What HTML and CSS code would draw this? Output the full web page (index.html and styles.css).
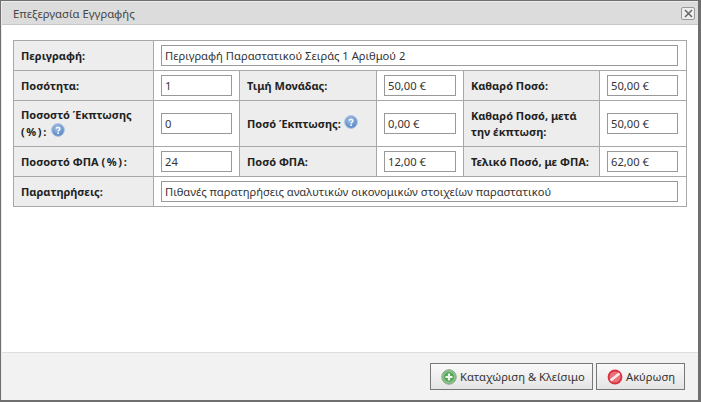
FILE: index.html
```html
<!DOCTYPE html>
<html lang="el">
<head>
<meta charset="utf-8">
<title>Επεξεργασία Εγγραφής</title>
<link rel="stylesheet" href="styles.css">
</head>
<body>
<div class="dialog">
  <header class="titlebar">
    <span class="title">Επεξεργασία Εγγραφής</span>
    <button class="close" type="button" aria-label="Κλείσιμο">
      <svg width="9" height="9" viewBox="0 0 9 9"><path d="M1 1l7 7M8 1l-7 7" stroke="#666" stroke-width="1.5" fill="none"/></svg>
    </button>
  </header>
  <main class="content">
    <table class="form">
      <colgroup><col class="c1"><col class="c2"><col class="c3"><col class="c4"><col class="c5"><col class="c6"></colgroup>
      <tr class="r30">
        <th>Περιγραφή:</th>
        <td colspan="5"><input class="inp wide" value="Περιγραφή Παραστατικού Σειράς 1 Αριθμού 2"></td>
      </tr>
      <tr class="r30">
        <th>Ποσότητα:</th><td><input class="inp" value="1"></td>
        <th>Τιμή Μονάδας:</th><td><input class="inp mid" value="50,00 €"></td>
        <th>Καθαρό Ποσό:</th><td><input class="inp" value="50,00 €"></td>
      </tr>
      <tr class="r46">
        <th>Ποσοστό Έκπτωσης <span class="pct">(%):</span> <svg class="help" viewBox="0 0 14 14"><use href="#help"/></svg></th><td><input class="inp" value="0"></td>
        <th>Ποσό Έκπτωσης: <svg class="help" viewBox="0 0 14 14"><use href="#help"/></svg></th><td><input class="inp mid" value="0,00 €"></td>
        <th>Καθαρό Ποσό, μετά την έκπτωση:</th><td><input class="inp" value="50,00 €"></td>
      </tr>
      <tr class="r30">
        <th>Ποσοστό ΦΠΑ <span class="pct">(%):</span></th><td><input class="inp" value="24"></td>
        <th>Ποσό ΦΠΑ:</th><td><input class="inp mid" value="12,00 €"></td>
        <th>Τελικό Ποσό, με ΦΠΑ:</th><td><input class="inp" value="62,00 €"></td>
      </tr>
      <tr class="r30">
        <th>Παρατηρήσεις:</th>
        <td colspan="5"><input class="inp wide" value="Πιθανές παρατηρήσεις αναλυτικών οικονομικών στοιχείων παραστατικού"></td>
      </tr>
    </table>
  </main>
  <footer class="actions">
    <button class="btn save" type="button">
      <svg class="ico" viewBox="0 0 16 16"><circle cx="8" cy="8" r="7.2" fill="#8fc08f" stroke="#7aa87a"/><circle cx="8" cy="8" r="5" fill="#55a955"/><path d="M8 4.5v7M4.5 8h7" stroke="#eef6ee" stroke-width="2.2"/></svg>
      <span>Καταχώριση &amp; Κλείσιμο</span>
    </button>
    <button class="btn cancel" type="button">
      <svg class="ico" viewBox="0 0 16 16"><circle cx="8" cy="8" r="7.4" fill="#d9323f"/><circle cx="8" cy="8" r="5.5" fill="#e8717a"/><path d="M3.5 11.5l9-7" stroke="#fbe9ea" stroke-width="2.6"/></svg>
      <span>Ακύρωση</span>
    </button>
  </footer>
</div>
<svg class="defs" width="0" height="0">
  <defs>
    <radialGradient id="hg" cx="0.45" cy="0.35" r="0.7"><stop offset="0" stop-color="#a9c6ea"/><stop offset="1" stop-color="#4a7cc0"/></radialGradient>
    <g id="help"><circle cx="7" cy="7" r="6.4" fill="url(#hg)" stroke="#b4c8e2"/><path d="M5.2 5.6c.2-1.6 3.7-1.7 3.7.2 0 1.3-1.8 1.3-1.8 2.6" stroke="#fff" stroke-width="1.3" fill="none"/><circle cx="7.1" cy="10.2" r=".9" fill="#fff"/></g>
  </defs>
</svg>
</body>
</html>
```
FILE: styles.css
```css
html, body { margin: 0; padding: 0; background: #6f6f6f; height: 402px; overflow: hidden; }
body { font-family: "Noto Sans", sans-serif; font-size: 11.2px; color: #222; }
.defs { display: block; }
.dialog { box-sizing: border-box; width: 697px; height: 399px; margin: 1px 0 0 1px; display: flex; flex-direction: column; background: #fff; border-left: 1px solid #ececec; border-top: 1px solid #ececec; }
.titlebar { height: 22px; flex: none; display: flex; align-items: center; justify-content: space-between; padding: 0 3px 0 11px; background: #dcdcdc; border-bottom: 1px solid #c8c8c8; }
.title { font-size: 11.3px; color: #444; }
.close { width: 14px; height: 13px; padding: 0; display: flex; align-items: center; justify-content: center; background: #eee; border: 1px solid #999; border-radius: 2px; }
.content { flex: 1; padding: 15px 11px 0; }
.form { border-collapse: collapse; table-layout: fixed; width: 673px; }
.c1 { width: 140px; } .c2 { width: 86px; } .c3 { width: 137px; } .c4 { width: 87px; } .c5 { width: 136px; } .c6 { width: 87px; }
.form th, .form td { border: 1px solid #a8a8a8; }
.form th { padding: 0 4px 0 7px; background: #ededed; text-align: left; font: bold 11px/16px "Noto Sans", sans-serif; color: #222; }
.form td { background: #fff; padding: 0 7px; }
.r30 { height: 30px; } .r46 { height: 46px; }
.pct { letter-spacing: 1.6px; }
.inp { box-sizing: border-box; display: block; width: 71px; height: 21px; padding: 0 3px; font: 11.2px "Noto Sans", sans-serif; color: #333; background: #fff; border: 1px solid #999; }
.inp.mid { width: 72px; }
.inp.wide { width: calc(100% - 1px); }
.help { width: 14px; height: 14px; vertical-align: -1px; }
.actions { flex: none; height: 47px; display: flex; justify-content: flex-end; align-items: center; gap: 3px; padding: 0 13px 0 0; background: #f2f2f2; border-top: 1px solid #dedede; }
.btn { box-sizing: border-box; height: 27px; display: flex; align-items: center; gap: 3px; padding: 0 0 0 10px; font: 11.2px "Noto Sans", sans-serif; color: #333; white-space: nowrap; background: linear-gradient(#fafafa, #e4e4e4); border: 1px solid #777; }
.save { width: 163px; } .cancel { width: 89px; }
.ico { width: 16px; height: 16px; }
```
